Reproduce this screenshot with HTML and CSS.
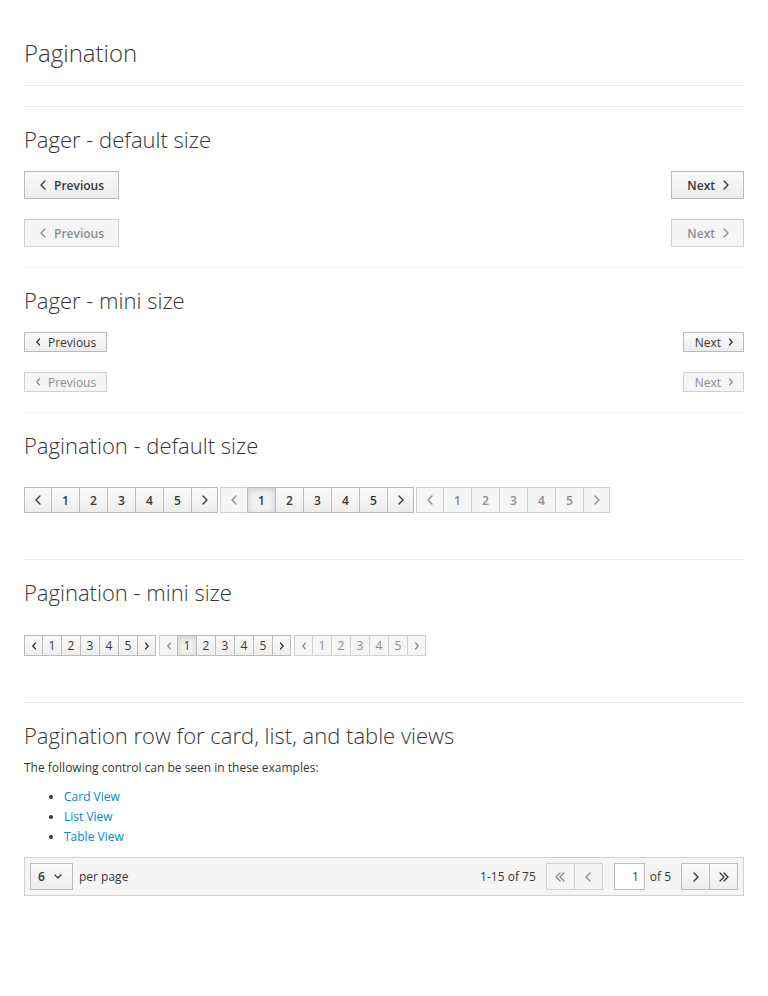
FILE: index.html
```html
<!DOCTYPE html>
<html>
<head>
<meta charset="utf-8">
<link rel="stylesheet" href="styles.css">
</head>
<body>
<div class="page">
  <div class="page-header"><h1>Pagination</h1></div>

  <section class="sec">
    <h2>Pager - default size</h2>
    <div class="pager">
      <a class="pbtn"><svg class="chev" viewBox="0 0 6 10"><polyline points="5,1 1,5 5,9"/></svg>Previous</a>
      <a class="pbtn">Next<svg class="chev" viewBox="0 0 6 10"><polyline points="1,1 5,5 1,9"/></svg></a>
    </div>
    <div class="pager">
      <a class="pbtn disabled"><svg class="chev" viewBox="0 0 6 10"><polyline points="5,1 1,5 5,9"/></svg>Previous</a>
      <a class="pbtn disabled">Next<svg class="chev" viewBox="0 0 6 10"><polyline points="1,1 5,5 1,9"/></svg></a>
    </div>
  </section>

  <section class="sec">
    <h2>Pager - mini size</h2>
    <div class="pager mini">
      <a class="pbtn"><svg class="chev" viewBox="0 0 4 8"><polyline points="3.5,1 0.8,4 3.5,7"/></svg>Previous</a>
      <a class="pbtn">Next<svg class="chev" viewBox="0 0 4 8"><polyline points="0.5,1 3.2,4 0.5,7"/></svg></a>
    </div>
    <div class="pager mini">
      <a class="pbtn disabled"><svg class="chev" viewBox="0 0 4 8"><polyline points="3.5,1 0.8,4 3.5,7"/></svg>Previous</a>
      <a class="pbtn disabled">Next<svg class="chev" viewBox="0 0 4 8"><polyline points="0.5,1 3.2,4 0.5,7"/></svg></a>
    </div>
  </section>

  <section class="sec">
    <h2>Pagination - default size</h2>
    <div class="pag-row">
      <ul class="pagination">
        <li><a><svg class="chev" viewBox="0 0 6 10"><polyline points="5,1 1,5 5,9"/></svg></a></li>
        <li><a>1</a></li><li><a>2</a></li><li><a>3</a></li><li><a>4</a></li><li><a>5</a></li>
        <li><a><svg class="chev" viewBox="0 0 6 10"><polyline points="1,1 5,5 1,9"/></svg></a></li>
      </ul>
      <ul class="pagination">
        <li class="disabled"><a><svg class="chev" viewBox="0 0 6 10"><polyline points="5,1 1,5 5,9"/></svg></a></li>
        <li class="active"><a>1</a></li><li><a>2</a></li><li><a>3</a></li><li><a>4</a></li><li><a>5</a></li>
        <li><a><svg class="chev" viewBox="0 0 6 10"><polyline points="1,1 5,5 1,9"/></svg></a></li>
      </ul>
      <ul class="pagination">
        <li class="disabled"><a><svg class="chev" viewBox="0 0 6 10"><polyline points="5,1 1,5 5,9"/></svg></a></li>
        <li class="disabled"><a>1</a></li><li class="disabled"><a>2</a></li><li class="disabled"><a>3</a></li><li class="disabled"><a>4</a></li><li class="disabled"><a>5</a></li>
        <li class="disabled"><a><svg class="chev" viewBox="0 0 6 10"><polyline points="1,1 5,5 1,9"/></svg></a></li>
      </ul>
    </div>
  </section>

  <section class="sec">
    <h2>Pagination - mini size</h2>
    <div class="pag-row mini">
      <ul class="pagination sm">
        <li><a><svg class="chev" viewBox="0 0 4 8"><polyline points="3.5,1 0.8,4 3.5,7"/></svg></a></li>
        <li><a>1</a></li><li><a>2</a></li><li><a>3</a></li><li><a>4</a></li><li><a>5</a></li>
        <li><a><svg class="chev" viewBox="0 0 4 8"><polyline points="0.5,1 3.2,4 0.5,7"/></svg></a></li>
      </ul>
      <ul class="pagination sm">
        <li class="disabled"><a><svg class="chev" viewBox="0 0 4 8"><polyline points="3.5,1 0.8,4 3.5,7"/></svg></a></li>
        <li class="active"><a>1</a></li><li><a>2</a></li><li><a>3</a></li><li><a>4</a></li><li><a>5</a></li>
        <li><a><svg class="chev" viewBox="0 0 4 8"><polyline points="0.5,1 3.2,4 0.5,7"/></svg></a></li>
      </ul>
      <ul class="pagination sm">
        <li class="disabled"><a><svg class="chev" viewBox="0 0 4 8"><polyline points="3.5,1 0.8,4 3.5,7"/></svg></a></li>
        <li class="disabled"><a>1</a></li><li class="disabled"><a>2</a></li><li class="disabled"><a>3</a></li><li class="disabled"><a>4</a></li><li class="disabled"><a>5</a></li>
        <li class="disabled"><a><svg class="chev" viewBox="0 0 4 8"><polyline points="0.5,1 3.2,4 0.5,7"/></svg></a></li>
      </ul>
    </div>
  </section>

  <section class="sec last">
    <h2>Pagination row for card, list, and table views</h2>
    <p class="lead">The following control can be seen in these examples:</p>
    <ul class="links">
      <li><a href="#">Card View</a></li>
      <li><a href="#">List View</a></li>
      <li><a href="#">Table View</a></li>
    </ul>
    <div class="list-pf-pagination">
      <div class="left">
        <span class="select">6<svg class="dd" viewBox="0 0 8 5"><polyline points="1,1 4,4 7,1"/></svg></span>
        <span class="perpage">per page</span>
      </div>
      <div class="right">
        <span class="items">1-15 of 75</span>
        <ul class="pagination nav">
          <li class="disabled"><a><svg class="dbl" viewBox="0 0 10 10"><polyline points="5,1 1,5 5,9"/><polyline points="9,1 5,5 9,9"/></svg></a></li>
          <li class="disabled"><a><svg class="chev" viewBox="0 0 6 10"><polyline points="5,1 1,5 5,9"/></svg></a></li>
        </ul>
        <span class="pageinput">1</span>
        <span class="of">of 5</span>
        <ul class="pagination nav">
          <li><a><svg class="chev" viewBox="0 0 6 10"><polyline points="1,1 5,5 1,9"/></svg></a></li>
          <li><a><svg class="dbl" viewBox="0 0 10 10"><polyline points="1,1 5,5 1,9"/><polyline points="5,1 9,5 5,9"/></svg></a></li>
        </ul>
      </div>
    </div>
  </section>
</div>
</body>
</html>
```

FILE: styles.css
```css
* { box-sizing: border-box; }
html, body { margin: 0; padding: 0; background: #fff; }
body {
  font-family: "Open Sans", "Liberation Sans", sans-serif;
  font-size: 12px;
  color: #363636;
}
.page { padding: 0 24px; }
.page-header {
  padding: 40px 0 19px;
  border-bottom: 1px solid #ededed;
  margin-bottom: 20px;
}
h1, h2 {
  margin: 0;
  font-weight: 300;
  color: #363636;
}
h1 { font-size: 24px; line-height: 26px; }
h2 { font-size: 22px; line-height: 24px; margin: 20px 0 20px; }
.sec { border-top: 1px solid #ededed; }
.sec:nth-of-type(1) { padding-bottom: 20px; }
.sec:nth-of-type(2) { padding-bottom: 20px; }
.sec:nth-of-type(3) { padding-bottom: 46px; }
.sec:nth-of-type(4) { padding-bottom: 46px; }

.pager {
  display: flex;
  justify-content: space-between;
  margin-bottom: 20px;
}
.pager:last-child { margin-bottom: 0; }
.pbtn {
  display: inline-flex;
  align-items: center;
  gap: 8px;
  height: 28px;
  padding: 0 14px 0 15px;
  border: 1px solid #bbb;
  background: linear-gradient(#fafafa, #ededed);
  font-weight: 600;
  font-size: 12px;
  color: #363636;
}
.pbtn .chev { width: 6px; height: 10px; }
.chev, .dbl, .dd {
  fill: none;
  stroke: currentColor;
  stroke-width: 1.3;
  stroke-linecap: round;
  stroke-linejoin: round;
}
.pbtn.disabled {
  background: #f5f5f5;
  border-color: #d1d1d1;
  color: #8b8d8f;
}
.pager.mini .pbtn {
  height: 20px;
  font-weight: 400;
  padding: 0 10px 0 11px;
  gap: 8px;
}
.pager.mini .pbtn .chev { width: 4px; height: 8px; }

.pag-row {
  display: flex;
  gap: 2px;
  margin-top: 30px;
}
.pag-row.mini { margin-top: 31px; gap: 3px; }
.pagination {
  display: flex;
  list-style: none;
  margin: 0;
  padding: 0;
}
.pagination li { margin-left: -1px; }
.pagination li:first-child { margin-left: 0; }
.pagination a {
  display: flex;
  align-items: center;
  justify-content: center;
  height: 26px;
  width: 29px;
  border: 1px solid #bbb;
  background: linear-gradient(#fafafa, #ededed);
  font-weight: 600;
  color: #363636;
}
.pagination li:first-child a { width: 28px; }
.pagination li:last-child a { width: 27px; }
.pagination .chev { width: 6px; height: 10px; }
.pagination li.disabled a {
  background: #f5f5f5;
  border-color: #d1d1d1;
  color: #8b8d8f;
}
.pagination li.active a {
  background: #f1f1f1;
  box-shadow: inset 0 2px 6px rgba(3,3,3,0.15);
  border-color: #bbb;
}
.pagination li.disabled + li:not(.disabled) { position: relative; z-index: 1; }
.pagination.sm a {
  height: 21px;
  width: 20px;
  font-weight: 400;
}
.pagination.sm li:first-child a, .pagination.sm li:last-child a { width: 19px; }
.pagination.sm .chev { width: 4px; height: 8px; }

p.lead { margin: 11px 0 9px; line-height: 20px; }
.sec.last h2 { margin-bottom: 10px; }
.links {
  margin: 0 0 10px;
  padding-left: 40px;
  line-height: 20px;
}
.links a { color: #0088ce; text-decoration: none; }

.list-pf-pagination {
  display: flex;
  justify-content: space-between;
  align-items: center;
  height: 39px;
  padding: 0 5px;
  background: #f5f5f5;
  border: 1px solid #d1d1d1;
}
.left, .right { display: flex; align-items: center; }
.select {
  display: inline-flex;
  align-items: center;
  gap: 9px;
  width: 43px;
  height: 27px;
  padding: 0 7px;
  border: 1px solid #bbb;
  background: linear-gradient(#fafafa, #ededed);
  font-weight: 600;
}
.dd { width: 8px; height: 5px; }
.perpage { margin-left: 6px; }
.items { margin-right: 10px; }
.pagination.nav a { height: 27px; width: 29px; }
.pagination.nav li:first-child a, .pagination.nav li:last-child a { width: 29px; }
.pagination.nav .dbl { width: 10px; height: 10px; }
.pageinput {
  display: inline-flex;
  align-items: center;
  justify-content: flex-end;
  width: 31px;
  height: 27px;
  margin-left: 11px;
  padding-right: 5px;
  background: #fff;
  border: 1px solid #bbb;
}
.of { margin: 0 10px 0 5px; }
```
